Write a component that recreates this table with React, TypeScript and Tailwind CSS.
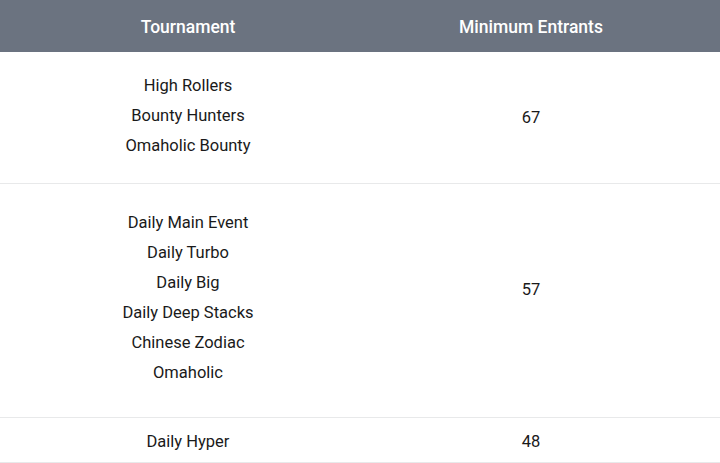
const rows = [
  {
    names: ["High Rollers", "Bounty Hunters", "Omaholic Bounty"],
    min: 67,
    cell: "pt-[19px] pb-[22px]",
    num: "pt-[51px]",
  },
  {
    names: [
      "Daily Main Event",
      "Daily Turbo",
      "Daily Big",
      "Daily Deep Stacks",
      "Chinese Zodiac",
      "Omaholic",
    ],
    min: 57,
    cell: "pt-[24px] pb-[29px]",
    num: "pt-[91px]",
  },
  {
    names: ["Daily Hyper"],
    min: 48,
    cell: "pt-[9px] pb-[5px]",
    num: "pt-[9px]",
  },
];

export default function App() {
  return (
    <div
      className="h-[463px] w-[720px] overflow-hidden bg-white text-[16.5px] text-[#1a1a1a]"
      style={{ fontFamily: "Roboto, 'Liberation Sans', sans-serif" }}
    >
      <div className="grid h-[52px] grid-cols-[376px_1fr] items-center bg-[#6b7380] pt-[2px] text-[17.5px] font-medium text-white">
        <div className="text-center">Tournament</div>
        <div className="pr-[34px] text-center">Minimum Entrants</div>
      </div>

      {rows.map((row) => (
        <div
          key={row.min}
          className="grid grid-cols-[376px_1fr] border-b border-[#e8e9ea]"
        >
          <div className={`text-center leading-[30px] ${row.cell}`}>
            {row.names.map((n) => (
              <div key={n}>{n}</div>
            ))}
          </div>
          <div className={`pr-[34px] text-center leading-[30px] ${row.num}`}>
            {row.min}
          </div>
        </div>
      ))}
    </div>
  );
}
